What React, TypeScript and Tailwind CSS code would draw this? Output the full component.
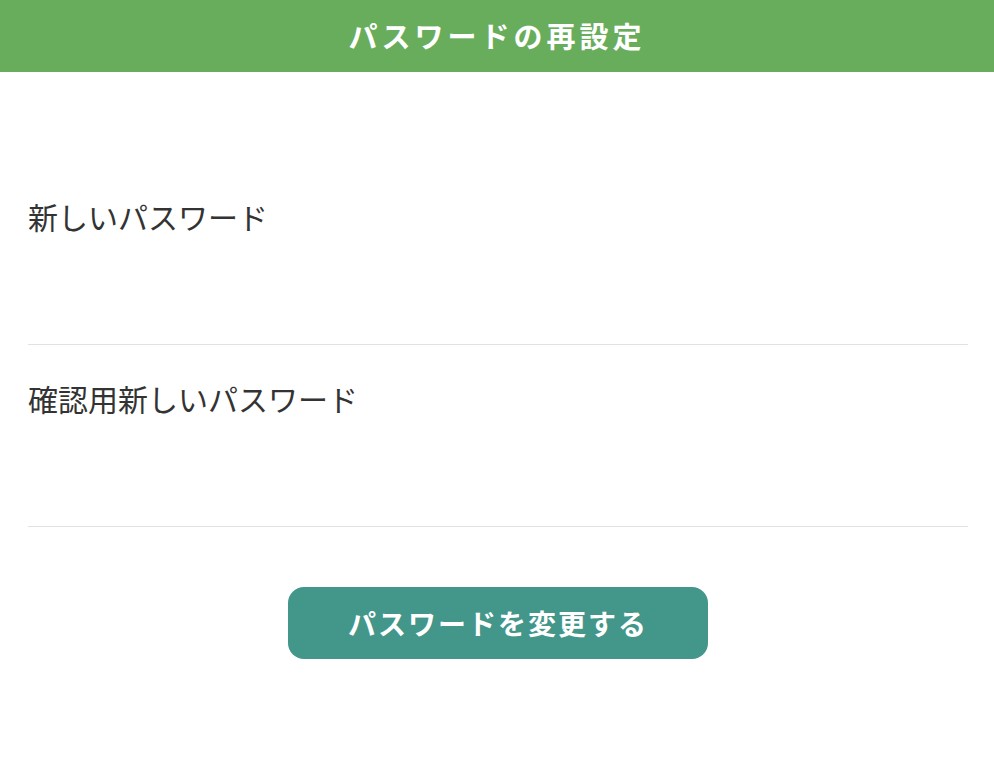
// パスワード再設定画面
const FONT = { fontFamily: '"Noto Sans CJK JP", "Noto Sans", sans-serif' };

function Field({ label, name }: { label: string; name: string }) {
  return (
    <div className="border-b border-[#e2e2e2] pt-[33px]">
      <label htmlFor={name} className="block text-[30px] leading-10 text-[#333333]">
        {label}
      </label>
      <input id={name} name={name} type="password" className="block h-[108px] w-full bg-transparent outline-none" />
    </div>
  );
}

export default function App() {
  return (
    <div className="min-h-[760px] w-full bg-white" style={FONT}>
      <header className="flex h-[72px] items-center justify-center bg-[#68ad5c]">
        <h1 className="text-[29px] font-bold tracking-[4px] text-white">パスワードの再設定</h1>
      </header>
      <main className="pl-7 pr-[26px] pt-[91px]">
        <Field label="新しいパスワード" name="password" />
        <Field label="確認用新しいパスワード" name="password_confirmation" />
        <div className="flex justify-center pt-[60px]">
          <button
            type="button"
            className="flex h-[72px] w-[420px] items-center justify-center rounded-2xl bg-[#42968a] text-[28px] font-bold tracking-[2px] text-white"
          >
            パスワードを変更する
          </button>
        </div>
      </main>
    </div>
  );
}
